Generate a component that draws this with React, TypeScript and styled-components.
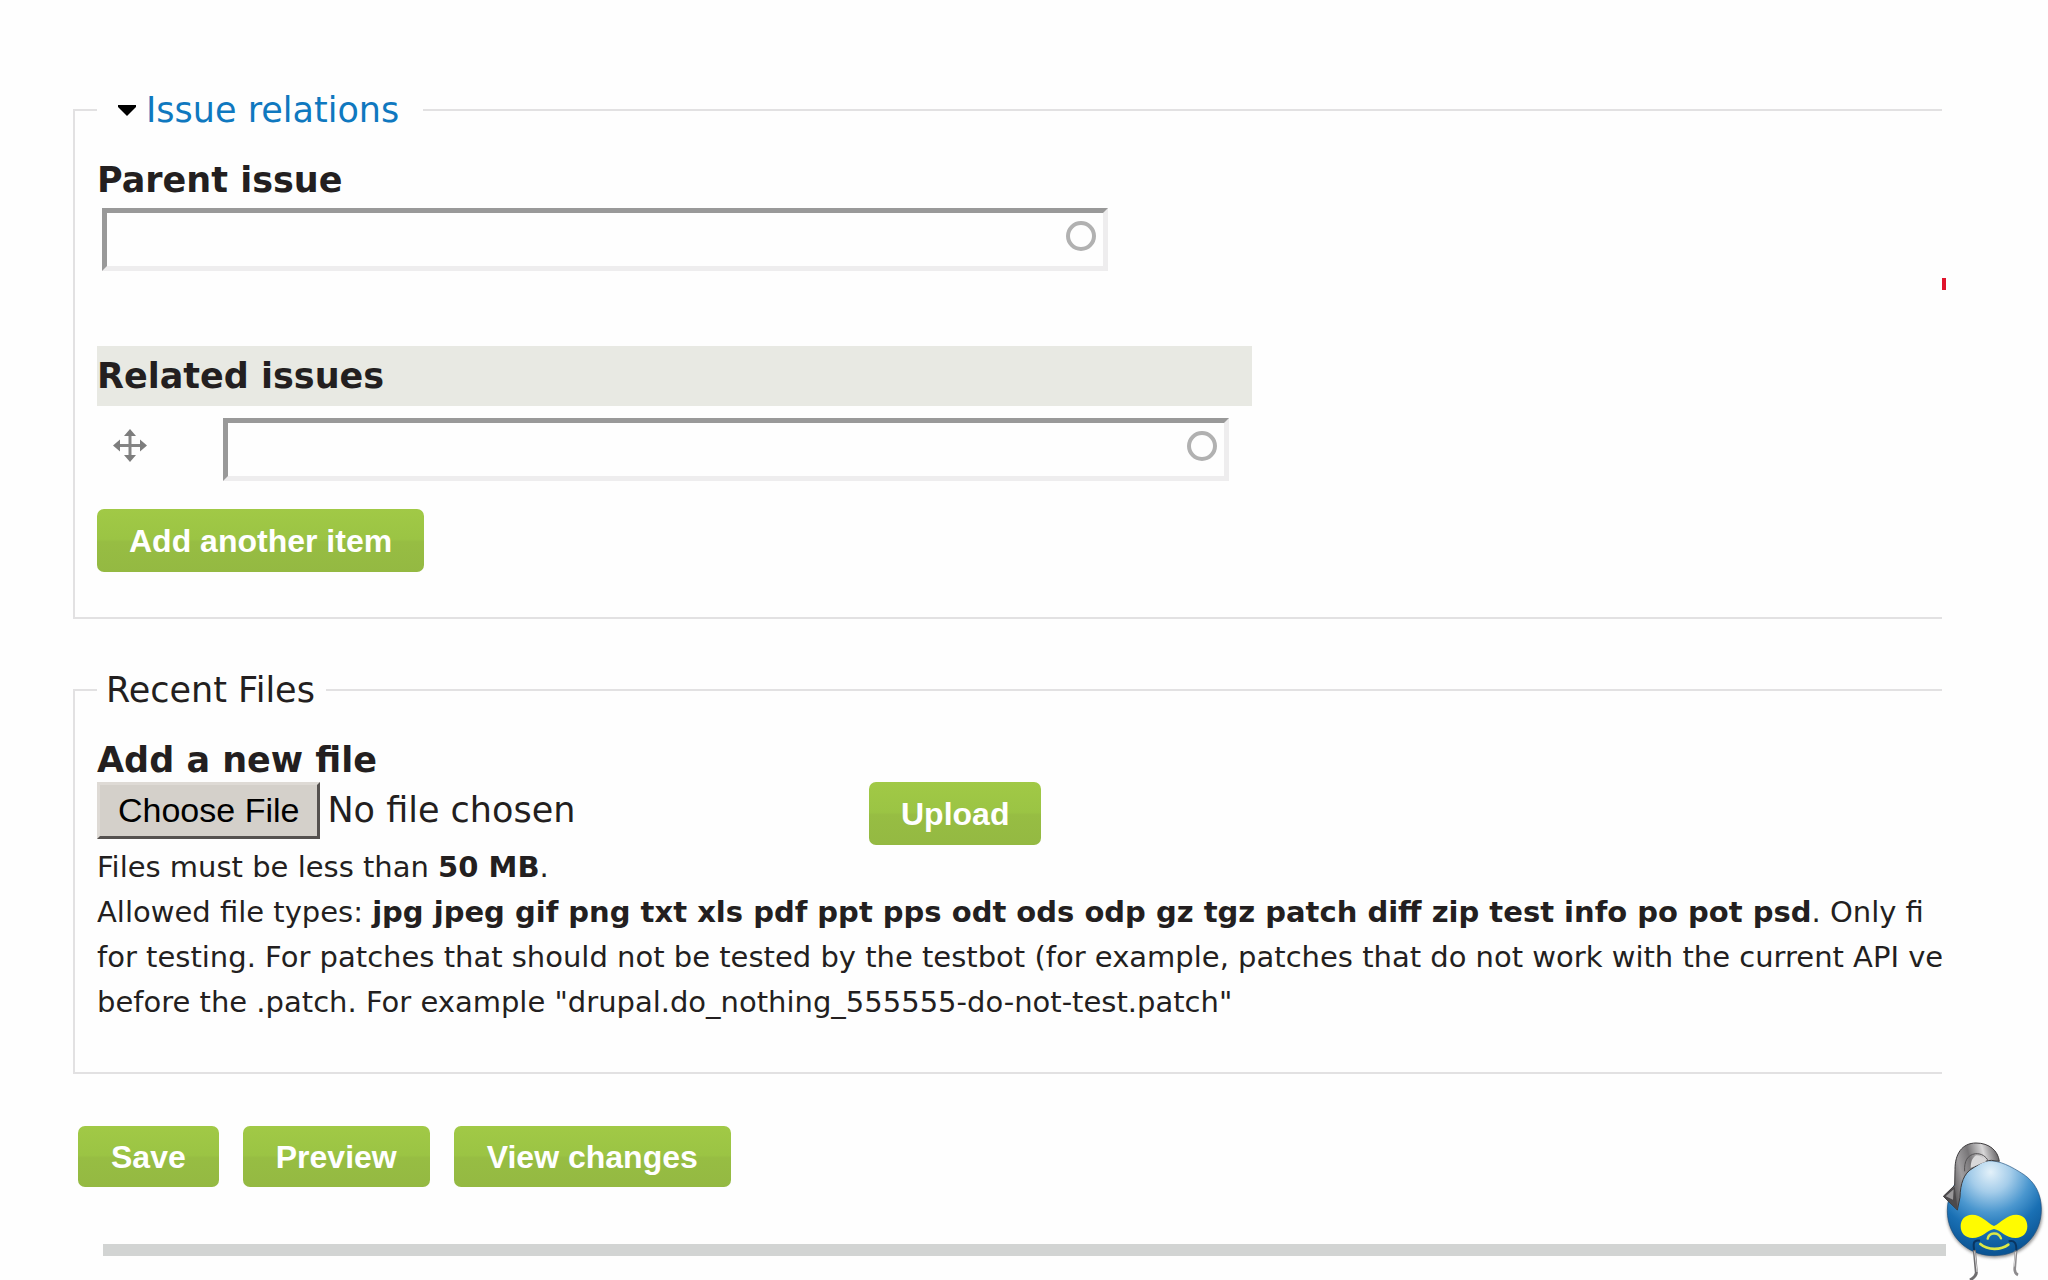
import React from "react";
import styled, { createGlobalStyle, css } from "styled-components";

const GlobalStyle = createGlobalStyle`
  * { box-sizing: border-box; }
  body {
    margin: 0;
    background: #fefefe;
    color: #231f20;
    font-family: "DejaVu Sans", Verdana, sans-serif;
    font-size: 35px;
  }
`;

const Page = styled.div`
  position: relative;
  min-height: 100vh;
  padding: 86px 106px 24px 73px;
  overflow: hidden;
`;

const Form = styled.form`
  position: relative;
  display: flex;
  flex-direction: column;
  gap: 47px;
`;

const Fieldset = styled.fieldset`
  min-width: 0;
  margin: 0;
  padding: 24px 0 45px 22px;
  border: 2px solid #e2e1e2;
  border-right: 0;
`;

const Legend = styled.legend<{ $collapsible?: boolean }>`
  padding: ${(p) => (p.$collapsible ? "0 24px 0 21px" : "0 11px 0 9px")};
  line-height: 48px;
`;

const ToggleLink = styled.a`
  display: flex;
  align-items: center;
  gap: 10px;
  color: #0f78bf;
  text-decoration: none;
`;

const labelText = css`
  font-size: 35px;
  font-weight: bold;
  line-height: 44px;
`;

const Label = styled.label`
  display: block;
  ${labelText}
`;

const FieldBox = styled.div`
  padding: 6px 5px 0;
`;

const InputWrap = styled.div`
  position: relative;
  width: 1006px;
  max-width: 100%;
`;

const TextInput = styled.input`
  display: block;
  width: 100%;
  height: 63px;
  padding: 0 56px 0 8px;
  border: 5px solid;
  border-color: #999 #eeedee #eeedee #999;
  background: #fefefe;
  font: inherit;
  outline: none;
`;

const Throbber = styled.svg`
  position: absolute;
  top: 12px;
  right: 11px;
`;

const IssueTable = styled.table`
  width: 1155px;
  max-width: 100%;
  margin-top: 75px;
  border-collapse: collapse;
  table-layout: fixed;
`;

const HeadCell = styled.th`
  height: 60px;
  padding: 0;
  background: #e8e9e3;
  text-align: left;
  ${labelText}
`;

const HandleCol = styled.col`
  width: 121px;
`;

const HandleCell = styled.td`
  padding: 11px 0 24px 16px;
  vertical-align: top;
`;

const InputCell = styled.td`
  padding: 12px 5px 28px;
`;

const HandleButton = styled.button`
  display: block;
  padding: 0;
  border: 0;
  background: none;
`;

const GreenButton = styled.button<{ $action?: boolean }>`
  height: ${(p) => (p.$action ? 61 : 63)}px;
  padding: 0 ${(p) => (p.$action ? 33 : 32)}px;
  border: 0;
  border-radius: 7px;
  background: linear-gradient(#a1c946, #9bc444 48%, #97bd43 52%, #94b942);
  color: #fff;
  font: bold 32px/60px "Liberation Sans", Arial, sans-serif;
  white-space: nowrap;
`;

const UploadRow = styled.div`
  display: flex;
  align-items: flex-start;
`;

const FileInput = styled.input`
  width: 772px;
  height: 57px;
  color: #231f20;
  font: 35px/44px "DejaVu Sans", Verdana, sans-serif;

  &::file-selector-button {
    height: 57px;
    margin: 0 7px 0 0;
    padding: 0 18px;
    border: 3px solid;
    border-color: #dedad5 #55514f #55514f #dedad5;
    background: #d4d0ca;
    color: #000;
    font: 34px "Liberation Sans", Arial, sans-serif;
  }
`;

const Description = styled.p`
  margin: 0 0 2px;
  overflow: hidden;
  font-size: 29px;
  line-height: 45px;
  white-space: nowrap;
`;

const Actions = styled.div`
  display: flex;
  gap: 24px;
  padding: 5px 5px 0;
`;

const Divider = styled.hr`
  width: auto;
  height: 12px;
  margin: 57px -4px 0 30px;
  border: 0;
  background: #d2d4d3;
`;

const RedMark = styled.span`
  position: absolute;
  top: 192px;
  right: -4px;
  width: 4px;
  height: 12px;
  background: #e0142c;
`;

const Mascot = styled.svg`
  position: fixed;
  right: 0;
  bottom: 0;
`;

function AutocompleteInput({ id, label }: { id: string; label?: string }) {
  return (
    <InputWrap>
      <TextInput id={id} type="text" aria-label={label} autoComplete="off" />
      <Throbber width="32" height="32" viewBox="0 0 32 32" aria-hidden="true">
        <circle cx="16" cy="16" r="13" fill="none" stroke="#b1b1b1" strokeWidth="4" />
      </Throbber>
    </InputWrap>
  );
}

function MoveIcon() {
  return (
    <svg width="34" height="56" viewBox="0 0 34 56" aria-hidden="true">
      <g stroke="#858585" strokeWidth="3">
        <path d="M17 17v23M5 28.500h24" />
      </g>
      <path
        fill="#7d7d7d"
        d="M17 12l6 7H11zM17 45l6-7H11zM0 28.500l7-6v12zM34 28.500l-7-6v12z"
      />
    </svg>
  );
}

function DruplIcon() {
  return (
    <Mascot width="128" height="160" viewBox="0 0 384 480" aria-hidden="true">
      <defs>
        <radialGradient id="skin" cx="0.46" cy="0.12" r="0.85">
          <stop offset="0" stopColor="#e3f1fa" />
          <stop offset="0.25" stopColor="#a5cdea" />
          <stop offset="0.5" stopColor="#4b97cf" />
          <stop offset="0.72" stopColor="#1a70b4" />
          <stop offset="1" stopColor="#0b5595" />
        </radialGradient>
        <linearGradient id="steel" x1="0" x2="1" y1="0.3" y2="0">
          <stop offset="0" stopColor="#4c4a4c" />
          <stop offset="0.25" stopColor="#a09ea0" />
          <stop offset="0.45" stopColor="#777577" />
          <stop offset="0.7" stopColor="#d8d7d8" />
          <stop offset="1" stopColor="#444244" />
        </linearGradient>
        <filter id="soft" x="-20%" y="-20%" width="140%" height="140%">
          <feGaussianBlur stdDeviation="5" />
        </filter>
      </defs>
      <ellipse cx="224" cy="282" rx="143" ry="132" fill="#555" opacity="0.6" filter="url(#soft)" />
      <path
        d="M205 122C240 122 272 138 312 164C345 187 364 222 364 268C364 350 300 407 222 407C142 407 82 350 82 272C82 220 110 170 150 145C172 132 186 122 205 122Z"
        fill="url(#skin)"
        stroke="#174c7c"
        strokeWidth="2"
      />
      <path
        d="M238 124C234 92 208 69 168 69C126 69 105 102 105 148L104 196L70 229L112 270L120 232C121 190 132 160 156 146C178 133 190 122 214 121Z"
        fill="url(#steel)"
        stroke="#3d3b3d"
        strokeWidth="3"
      />
      <path d="M134 154C132 124 142 105 166 101C186 100 198 110 205 123" fill="none" stroke="#555355" strokeWidth="3" />
      <path d="M152 144C152 124 158 112 169 106C184 108 192 115 199 124Z" fill="#d9d8d9" />
      <path d="M71 230L104 200L108 232L113 268Z" fill="#4c4a4c" />
      <path d="M77 229L101 208L99 239Z" fill="#9a989a" />
      <path
        d="M222 318C202 308 184 284 156 284C135 284 122 299 122 319C122 340 136 354 157 354C187 354 202 330 222 327C242 330 257 354 287 354C308 354 322 340 322 319C322 299 310 284 289 284C261 284 242 308 222 318Z"
        fill="#fffb00"
      />
      <path d="M203 356C207 337 235 334 243 355" fill="none" stroke="#dce846" strokeWidth="7" strokeLinecap="round" />
      <path d="M181 372C203 391 242 391 265 374" fill="none" stroke="#dce846" strokeWidth="8" strokeLinecap="round" />
      <path d="M180 362C159 358 159 372 163 392" fill="none" stroke="#0a3560" strokeWidth="6" />
      <path d="M266 364C284 359 290 370 289 394" fill="none" stroke="#0a3560" strokeWidth="6" />
      <path d="M163 390L169 458Q168 470 150 480" fill="none" stroke="#6f6d6f" strokeWidth="9" />
      <path d="M288 392L284 448Q284 460 294 465" fill="none" stroke="#8d8b8d" strokeWidth="8" />
      <path d="M164 394L171 456M287 396L282 440" fill="none" stroke="#dad9da" strokeWidth="3" />
    </Mascot>
  );
}

export default function App() {
  return (
    <Page>
      <GlobalStyle />
      <Form onSubmit={(e) => e.preventDefault()}>
        <RedMark />
        <Fieldset>
          <Legend $collapsible>
            <ToggleLink href="#relations">
              <svg width="18" height="11" viewBox="0 0 18 11" aria-hidden="true">
                <path d="M0 0h18v2l-9 9-9-9z" fill="#000" />
              </svg>
              Issue relations
            </ToggleLink>
          </Legend>
          <Label htmlFor="parent">Parent issue</Label>
          <FieldBox>
            <AutocompleteInput id="parent" />
          </FieldBox>
          <IssueTable>
            <colgroup>
              <HandleCol />
              <col />
            </colgroup>
            <thead>
              <tr>
                <HeadCell colSpan={2}>Related issues</HeadCell>
              </tr>
            </thead>
            <tbody>
              <tr>
                <HandleCell>
                  <HandleButton type="button" aria-label="Drag to re-order">
                    <MoveIcon />
                  </HandleButton>
                </HandleCell>
                <InputCell>
                  <AutocompleteInput id="related" label="Related issue" />
                </InputCell>
              </tr>
            </tbody>
          </IssueTable>
          <GreenButton type="button">Add another item</GreenButton>
        </Fieldset>

        <Fieldset>
          <Legend>Recent Files</Legend>
          <Label htmlFor="file">Add a new file</Label>
          <UploadRow>
            <FileInput id="file" type="file" />
            <GreenButton type="button">Upload</GreenButton>
          </UploadRow>
          <Description>
            Files must be less than <strong>50 MB</strong>.<br />
            Allowed file types:{" "}
            <strong>
              jpg jpeg gif png txt xls pdf ppt pps odt ods odp gz tgz patch diff zip test info po pot psd
            </strong>
            . Only fi
            <br />
            for testing. For patches that should not be tested by the testbot (for example, patches that do not
            work with the current API ve
            <br />
            before the .patch. For example "drupal.do_nothing_555555-do-not-test.patch"
          </Description>
        </Fieldset>

        <Actions>
          <GreenButton $action type="submit">Save</GreenButton>
          <GreenButton $action type="button">Preview</GreenButton>
          <GreenButton $action type="button">View changes</GreenButton>
        </Actions>
      </Form>
      <Divider />
      <DruplIcon />
    </Page>
  );
}
